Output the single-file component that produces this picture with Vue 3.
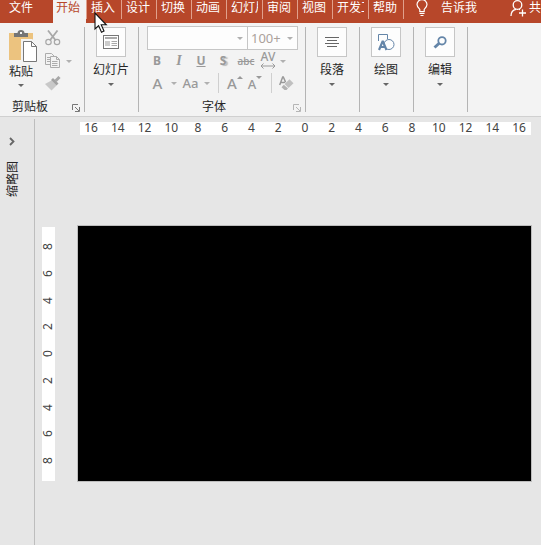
<script setup>
import { ref } from 'vue'

const tabs = [
  { text: '插入' },
  { text: '设计' },
  { text: '切换' },
  { text: '动画' },
  { text: '幻灯片', wide: true },
  { text: '审阅' },
  { text: '视图' },
  { text: '开发工', wide: true },
  { text: '帮助' },
]
const across = [16, 14, 12, 10, 8, 6, 4, 2, 0, 2, 4, 6, 8, 10, 12, 14, 16]
const down = [8, 6, 4, 2, 0, 2, 4, 6, 8]
const fontName = ref('')
const fontSize = ref('100+')
</script>

<template>
  <div class="app">
    <nav class="tabs">
      <button class="tab file">文件</button>
      <button class="tab active">开始</button>
      <button v-for="t in tabs" :key="t.text" class="tab cell" :class="{ wide: t.wide }">
        <span class="clip">{{ t.text }}</span>
      </button>
      <button class="tab tell">
        <svg width="12" height="18" viewBox="0 0 12 18" fill="none" stroke="#fff" stroke-width="1.2">
          <path d="M3.8 11.500V9.400C2.400 7.800 1 6.600 1 4.600A5 5 0 0 1 11 4.600C11 6.600 9.600 7.800 8.200 9.400V11.500ZM3.500 13.400H8.500M4.500 15.500H7.500" />
        </svg>
        <span>告诉我</span>
      </button>
      <button class="tab share">
        <svg width="16" height="17" viewBox="0 0 16 17" fill="none" stroke="#fff" stroke-width="1.3">
          <circle cx="7.500" cy="5" r="4.300" />
          <path d="M1 16C1 12 3 9.800 6 9.300M9 9.300L10 9.700M12.500 9.500V16.500M9 13H16" />
        </svg>
        <span>共享</span>
      </button>
      <svg class="pointer" width="14" height="22" viewBox="0 0 14 22">
        <path d="M1 1V17L4.600 13.600L7.500 20.200L10 19L7.200 12.800H12.300Z" fill="#fff" stroke="#111" stroke-width="1.100" />
      </svg>
    </nav>

    <header class="ribbon">
      <section class="group clipboard">
        <div class="clip-tools">
          <button class="paste">
            <svg width="28" height="32" viewBox="0 0 28 32">
              <rect x="0" y="3" width="24" height="27" fill="#ecc37f" />
              <path d="M5 7V3H8.500C8.500 1 10 0 12 0S15.500 1 15.500 3H19V7Z" fill="#757575" />
              <rect x="11" y="2" width="2" height="2" fill="#f3f3f3" />
              <path d="M13.500 10.500H22.500L27.500 15.500V31.500H13.500Z" fill="#fff" stroke="#f3f3f3" stroke-width="3" />
              <path d="M14.500 11.500H22.500L27.500 16.500V31.500H14.500ZM22.500 11.500V16.500H27.500" fill="#fff" stroke="#777" />
            </svg>
            <span class="caption">
              <span>粘贴</span>
              <i class="caret"></i>
            </span>
          </button>
          <div class="minis">
            <button aria-label="剪切">
              <svg width="16" height="16" viewBox="0 0 16 16" fill="none" stroke="#a8a8a8">
                <path d="M3 .5L10.800 10.500M12.500 .5L4.800 10.500" stroke-width="1.800" />
                <circle cx="3.500" cy="12" r="2.700" stroke-width="1.200" />
                <circle cx="12" cy="12" r="2.700" stroke-width="1.200" />
              </svg>
            </button>
            <div class="copy">
              <button aria-label="复制">
                <svg width="16" height="16" viewBox="0 0 16 16" fill="#f3f3f3" stroke="#acacac">
                  <path d="M.5 .5H6.500L9.500 3.500V11.500H.5ZM2 4.500H5M2 6.500H5M2 8.500H5" />
                  <path d="M5.500 3.500H11.500L14.500 6.500V14.500H5.500ZM11.500 3.500V6.500H14.500M7 8.500H12.500M7 10.500H12.500M7 12.500H12.500" />
                </svg>
              </button>
              <button class="drop" aria-label="复制选项"><i class="caret pale"></i></button>
            </div>
            <button aria-label="格式刷">
              <svg width="16" height="16" viewBox="0 0 16 16">
                <path d="M0 8L6.500 4.500L11.500 9.500L6.500 14.500Z" fill="#c8c8c8" />
                <path d="M6 4L8 2L13.500 7.500L11.500 9.500Z" fill="#a2a2a2" />
                <path d="M10.500 5L14.500 1" stroke="#a8a8a8" stroke-width="3" />
              </svg>
            </button>
          </div>
        </div>
        <footer>
          <span>剪贴板</span>
          <button class="launch" aria-label="剪贴板选项">
            <svg width="8" height="8" viewBox="0 0 8 8" fill="none" stroke="#777"><path d="M.5 6V.5H6M3 3L7 7M7.500 3V7.500H3" /></svg>
          </button>
        </footer>
      </section>

      <section class="group single">
        <button class="big">
          <span class="box">
            <svg width="16" height="14" viewBox="0 0 16 14">
              <rect x=".5" y=".5" width="15" height="13" fill="#fff" stroke="#777" />
              <path d="M2 3H14" stroke="#aaa" stroke-width="2" />
              <rect x="2" y="6" width="5" height="5" fill="#ccc" />
              <path d="M8.500 6.500H14M8.500 8.500H14M8.500 10.500H14" stroke="#aaa" />
            </svg>
          </span>
          <span>幻灯片</span>
          <i class="caret"></i>
        </button>
      </section>

      <section class="group font">
        <div class="combos">
          <label class="combo name">
            <select v-model="fontName" aria-label="字体"><option value=""></option></select>
            <i class="caret pale"></i>
          </label>
          <label class="combo size">
            <select v-model="fontSize" aria-label="字号"><option>100+</option></select>
            <i class="caret pale"></i>
          </label>
        </div>
        <div class="row">
          <button class="bold">B</button>
          <button class="italic">I</button>
          <button class="underline">U</button>
          <button class="shadow">S</button>
          <button class="strike">abc</button>
          <button class="spacing">
            <span>AV</span>
            <svg width="16" height="6" viewBox="0 0 16 6" fill="none" stroke="#999"><path d="M1 3H15M3.500 .5L1 3L3.500 5.500M12.500 .5L15 3L12.500 5.500" /></svg>
          </button>
          <button class="drop" aria-label="字符间距"><i class="caret pale"></i></button>
        </div>
        <div class="row">
          <button class="letter">A</button>
          <button class="drop" aria-label="字体颜色"><i class="caret pale"></i></button>
          <button class="case">Aa</button>
          <button class="drop" aria-label="更改大小写"><i class="caret pale"></i></button>
          <i class="rule"></i>
          <button class="grow"><span>A</span><i class="tri up"></i></button>
          <button class="shrink"><span>A</span><i class="tri"></i></button>
          <i class="rule"></i>
          <button class="erase" aria-label="清除格式">
            <svg width="15" height="15" viewBox="0 0 15 15">
              <path d="M.7 9L3.700 1H4.300L7 7M2 6.500H6" fill="none" stroke="#999" stroke-width="1.500" />
              <path d="M1.500 11L10 3L14.500 7L7 14.500H4.500Z" fill="#f3f3f3" />
              <path d="M5.500 8L10.500 3.200L14.500 7.200L9.500 12Z" fill="#c0c0c0" />
              <path d="M4.800 8.800L2.500 11.200L5.500 14H7.500L9 12.500" fill="#b2b2b2" />
            </svg>
          </button>
        </div>
        <footer>
          <span>字体</span>
          <button class="launch" aria-label="字体选项">
            <svg width="8" height="8" viewBox="0 0 8 8" fill="none" stroke="#b5b5b5"><path d="M.5 6V.5H6M3 3L7 7M7.500 3V7.500H3" /></svg>
          </button>
        </footer>
      </section>

      <section class="group single">
        <button class="big">
          <span class="box">
            <svg width="14" height="10" viewBox="0 0 14 10" stroke="#666"><path d="M0 .5H14M2 3.500H12M0 6.500H14M2 9.500H12" /></svg>
          </span>
          <span>段落</span>
          <i class="caret"></i>
        </button>
      </section>
      <section class="group single">
        <button class="big">
          <span class="box">
            <svg width="17" height="17" viewBox="0 0 17 17" fill="none" stroke="#6485a8">
              <path d="M.5 7V.5H9.500V5" />
              <circle cx="11" cy="10.500" r="5" fill="#fdfdfd" />
              <path d="M1 16L4.500 7.500H5L8.500 16M2.500 13H7" stroke-width="2.200" />
            </svg>
          </span>
          <span>绘图</span>
          <i class="caret"></i>
        </button>
      </section>
      <section class="group single">
        <button class="big">
          <span class="box">
            <svg width="14" height="13" viewBox="0 0 14 13" fill="none" stroke="#6485a8">
              <circle cx="9" cy="4.800" r="3.700" stroke-width="1.800" />
              <path d="M6.500 7L1.500 11.500" stroke-width="3" />
            </svg>
          </span>
          <span>编辑</span>
          <i class="caret"></i>
        </button>
      </section>
    </header>

    <main class="work">
      <aside class="thumbs">
        <button aria-label="展开">
          <svg width="6" height="9" viewBox="0 0 6 9" fill="none" stroke="#666" stroke-width="1.800"><path d="M1 1L4.500 4.500L1 8" /></svg>
        </button>
        <span>缩略图</span>
      </aside>
      <div class="canvas">
        <div class="ruler across"><span v-for="(n, i) in across" :key="i">{{ n }}</span></div>
        <div class="stage">
          <div class="ruler down"><span v-for="(n, i) in down" :key="i">{{ n }}</span></div>
          <div class="slide"></div>
        </div>
      </div>
    </main>
  </div>
</template>

<style>
body {
  background: #e6e6e6;
  overflow: hidden;
}
</style>

<style scoped>
.app {
  min-height: 100vh;
  display: flex;
  flex-direction: column;
  font: 12px/16px 'Noto Sans', 'Noto Sans CJK SC', sans-serif;
  color: #262626;
  background: #e6e6e6;
}
button {
  border: 0;
  padding: 0;
  margin: 0;
  background: none;
  font: inherit;
  color: inherit;
}
svg {
  display: block;
  flex: none;
}
.tabs {
  position: relative;
  display: flex;
  height: 23px;
  background: #b7472a;
  color: #fff;
  font-family: 'Noto Sans CJK SC', sans-serif;
}
.tab {
  display: flex;
  align-items: flex-start;
  flex: none;
  white-space: nowrap;
  line-height: 14px;
}
.file {
  width: 53px;
  padding-left: 9px;
}
.active {
  width: 33px;
  padding-left: 3px;
  background: #f3f3f3;
  color: #b7472a;
}
.cell {
  width: 35px;
  height: 19px;
  padding: 0 4px;
  border-right: 1px solid #e0a08c;
}
.active + .cell {
  width: 36px;
  border-left: 1px solid #e0a08c;
}
.wide {
  width: 36px;
}
.clip {
  overflow: hidden;
}
.tell {
  gap: 13px;
  margin-left: 12px;
}
.share {
  gap: 3px;
  margin-left: 33px;
}
.pointer {
  position: absolute;
  left: 94px;
  top: 12px;
  z-index: 2;
}
.ribbon {
  display: flex;
  height: 93px;
  background: #f3f3f3;
  border-bottom: 1px solid #d0d0d0;
}
.group {
  display: flex;
  flex-direction: column;
  flex: none;
  margin: 4px 0;
  border-right: 1px solid #b4b4b4;
}
.clipboard {
  width: 84px;
}
.single {
  width: 45px;
  padding-left: 8px;
  align-items: flex-start;
}
.font {
  width: 166px;
}
.clip-tools {
  display: flex;
  gap: 8px;
  padding: 3px 0 0 9px;
}
.paste,
.big,
.caption {
  display: flex;
  flex-direction: column;
  align-items: center;
}
.paste {
  width: 28px;
  gap: 2px;
  align-items: flex-start;
}
.caption {
  gap: 4px;
}
.big {
  width: 36px;
  gap: 5px;
}
.box {
  display: flex;
  align-items: center;
  justify-content: center;
  width: 28px;
  height: 28px;
  border: 1px solid #c6c6c6;
  background: #fdfdfd;
}
.caret {
  width: 0;
  height: 0;
  border: 3px solid transparent;
  border-top-color: #666;
  border-bottom: 0;
}
.caret.pale {
  border-top-color: #b0b0b0;
}
.minis {
  display: flex;
  flex-direction: column;
  align-items: flex-start;
  gap: 7px;
}
.copy {
  display: flex;
  gap: 3px;
}
.drop {
  display: flex;
  align-items: center;
  justify-content: center;
  width: 10px;
}
footer {
  display: flex;
  justify-content: center;
  position: relative;
  margin-top: auto;
  height: 14px;
  padding-right: 24px;
  font: 12px/16px 'Noto Sans CJK SC', sans-serif;
}
.font footer {
  padding-right: 16px;
}
.launch {
  position: absolute;
  right: 4px;
  bottom: 0;
}
.combos {
  display: flex;
  margin: -1px 7px 0 8px;
}
.combo {
  display: flex;
  align-items: center;
  height: 22px;
  padding-right: 4px;
  border: 1px solid #c6c6c6;
  background: #fdfdfd;
}
.combo.name {
  flex: 1;
}
.combo.size {
  width: 45px;
  border-left: 0;
}
.combo select {
  flex: 1;
  min-width: 0;
  appearance: none;
  border: 0;
  padding: 0 0 0 3px;
  background: none;
  color: #aba19b;
  font: 13px/20px 'Noto Sans', sans-serif;
}
.row {
  display: flex;
  align-items: center;
  height: 22px;
  padding-left: 7px;
  color: #999;
}
.row button {
  flex: none;
  height: 20px;
}
.row .drop {
  width: 10px;
}
.bold,
.italic,
.underline,
.shadow {
  width: 22px;
  font-weight: 700;
}
.italic {
  font-family: 'Liberation Serif', serif;
  font-style: italic;
  font-size: 14px;
}
.underline {
  text-decoration: underline;
}
.shadow {
  text-shadow: 2px 1px 1px #bbb;
}
.strike {
  width: 24px;
  font-size: 10px;
  text-decoration: line-through;
}
.spacing {
  display: flex;
  flex-direction: column;
  align-items: center;
  width: 20px;
  line-height: 12px;
}
.letter {
  width: 23px;
  font-size: 15px;
}
.case {
  width: 23px;
  font-size: 13px;
}
.letter,
.case,
.strike,
.spacing,
.grow,
.shrink {
  font-weight: 500;
}
.rule {
  width: 1px;
  height: 20px;
  margin: 0 6px;
  background: #cfcfcf;
}
.grow,
.shrink {
  display: flex;
  justify-content: center;
  width: 20px;
}
.grow {
  font-size: 15px;
  line-height: 20px;
}
.shrink {
  font-size: 13px;
  line-height: 22px;
}
.tri {
  width: 0;
  height: 0;
  margin-top: 3px;
  border: 3px solid transparent;
  border-top: 3px solid #999;
  border-bottom: 0;
}
.tri.up {
  border-top: 0;
  border-bottom: 3px solid #999;
}
.erase {
  width: 16px;
  display: flex;
  align-items: center;
  justify-content: center;
}
.work {
  display: flex;
  flex: 1;
  padding-top: 2px;
}
.thumbs {
  display: flex;
  flex-direction: column;
  align-items: center;
  gap: 15px;
  width: 24px;
  padding: 18px 10px 0 0;
  border-right: 1px solid #bdbdbd;
}
.thumbs span {
  writing-mode: vertical-rl;
  text-orientation: sideways;
  transform: rotate(180deg);
  font-family: 'Noto Sans CJK SC', sans-serif;
}
.canvas {
  flex: 1;
  padding: 3px 9px 0 7px;
}
.ruler {
  display: flex;
  justify-content: space-between;
  background: #fff;
  color: #444;
}
.ruler.across {
  height: 13px;
  margin: 0 1px 0 38px;
  padding: 0 4px 0 3px;
  line-height: 12px;
}
.ruler.across span {
  width: 16px;
  text-align: center;
}
.stage {
  display: flex;
  gap: 22px;
  margin-top: 90px;
}
.ruler.down {
  flex-direction: column;
  width: 13px;
  margin: 2px 0 1px;
  padding: 12px 0;
}
.ruler.down span {
  width: 12px;
  height: 16px;
  line-height: 12px;
  text-align: center;
  writing-mode: vertical-rl;
  text-orientation: sideways;
  transform: rotate(180deg);
}
.slide {
  flex: 1;
  aspect-ratio: 453 / 255;
  background: #000;
  border: 1px solid #bdbdbd;
}
</style>
